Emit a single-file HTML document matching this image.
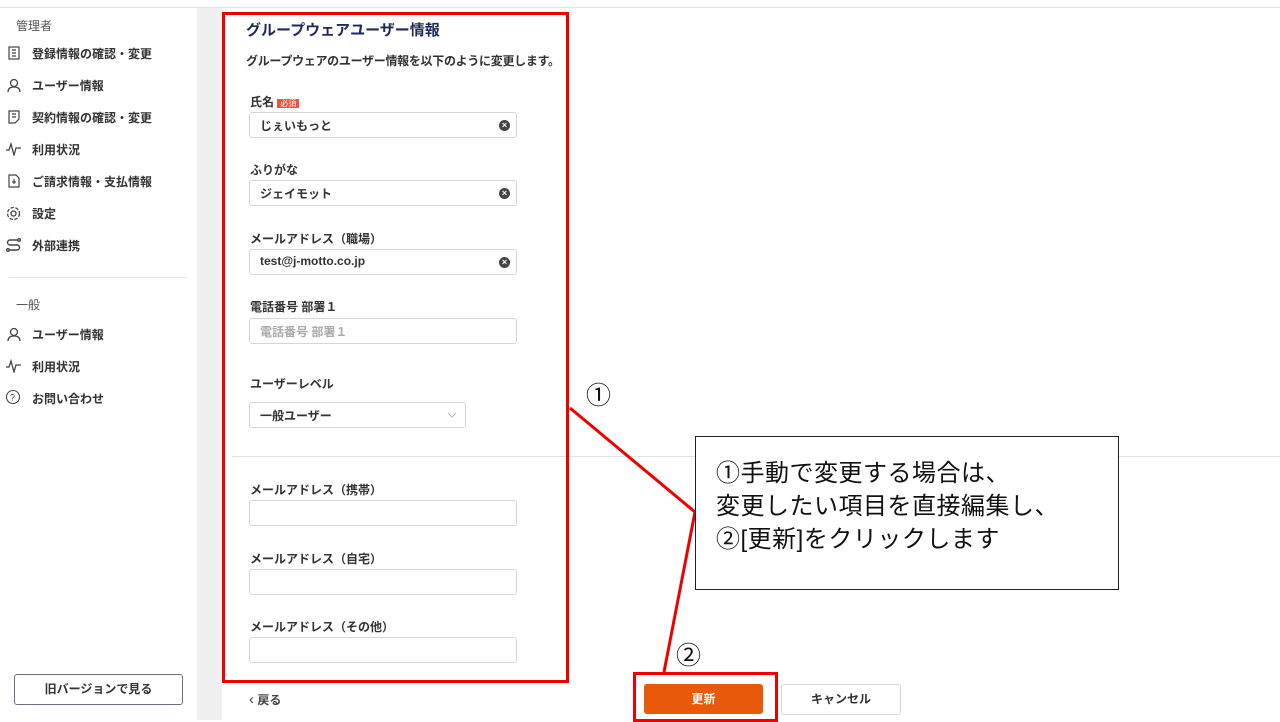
<!DOCTYPE html>
<html><head><meta charset="utf-8"><style>
*{margin:0;padding:0;box-sizing:border-box}
body{width:1280px;height:720px;position:relative;overflow:hidden;background:#fff;font-family:"Liberation Sans","Noto Sans CJK JP",sans-serif;color:#333}
.a{position:absolute}
.side{font-size:12px;font-weight:bold;color:#333}
.lbl{position:absolute;left:250px;font-size:12px;font-weight:bold;color:#333}
.inp{position:absolute;left:249px;width:268px;height:26px;border:1px solid #d6d6d6;border-radius:3px;font-size:12px;font-weight:bold;padding:4px 10px;color:#333}
.x{position:absolute;right:6px;top:7px;width:11px;height:11px;border-radius:50%;background:#444;color:#fff;font-size:9px;line-height:11px;text-align:center}
</style></head><body>
<div class="a" style="left:0;top:0;width:1280px;height:8px;border-bottom:1px solid #e4e4e4"></div>
<div class="a" style="left:197px;top:8px;width:25px;height:712px;background:#f0f0f0"></div>
<div class="a side" style="left:16px;top:17px;font-weight:normal;color:#555">管理者</div>
<svg class="a" style="left:7px;top:46px" width="14" height="14" viewBox="0 0 14 14" fill="none" stroke="#444" stroke-width="1.2"><rect x="2" y="1" width="10" height="12"/><path d="M5 4h4M5 7h4M5 10h4"/></svg>
<div class="a side" style="left:32px;top:45px">登録情報の確認・変更</div>
<svg class="a" style="left:7px;top:78px" width="14" height="14" viewBox="0 0 14 14" fill="none" stroke="#444" stroke-width="1.3"><circle cx="7" cy="5" r="3.5"/><path d="M1 14c0-4 3-5 6-5s6 1 6 5"/></svg>
<div class="a side" style="left:32px;top:77px">ユーザー情報</div>
<svg class="a" style="left:7px;top:110px" width="14" height="14" viewBox="0 0 14 14" fill="none" stroke="#444" stroke-width="1.2"><path d="M2 1h10v8l-4 4H2z M5 4h4M5 7h4"/></svg>
<div class="a side" style="left:32px;top:109px">契約情報の確認・変更</div>
<svg class="a" style="left:6px;top:142px" width="16" height="14" viewBox="0 0 16 14" fill="none" stroke="#444" stroke-width="1.3"><path d="M0 8h3l2-6 3 11 2-7h5"/></svg>
<div class="a side" style="left:32px;top:141px">利用状況</div>
<svg class="a" style="left:7px;top:174px" width="14" height="14" viewBox="0 0 14 14" fill="none" stroke="#444" stroke-width="1.2"><path d="M2 1h7l3 3v9H2z M7 5v5M5 8h4"/></svg>
<div class="a side" style="left:32px;top:173px">ご請求情報・支払情報</div>
<svg class="a" style="left:5px;top:205px" width="17" height="17" viewBox="0 0 17 17" fill="none" stroke="#444" stroke-width="1.3"><circle cx="8.5" cy="8.5" r="2.5"/><circle cx="8.5" cy="8.5" r="6" stroke-dasharray="3.5 1.5"/></svg>
<div class="a side" style="left:32px;top:205px">設定</div>
<svg class="a" style="left:6px;top:238px" width="15" height="14" viewBox="0 0 15 14" fill="none" stroke="#444" stroke-width="1.4"><path d="M12 2H4a2.5 2.5 0 000 5h7a2.5 2.5 0 010 5H3"/><circle cx="13" cy="2" r="1.3"/><circle cx="2" cy="12" r="1.3"/></svg>
<div class="a side" style="left:32px;top:237px">外部連携</div>
<div class="a" style="left:9px;top:277px;width:177px;height:1px;background:#e2e2e2"></div>
<div class="a side" style="left:16px;top:296px;font-weight:normal;color:#555">一般</div>
<svg class="a" style="left:7px;top:327px" width="14" height="14" viewBox="0 0 14 14" fill="none" stroke="#444" stroke-width="1.3"><circle cx="7" cy="5" r="3.5"/><path d="M1 14c0-4 3-5 6-5s6 1 6 5"/></svg>
<div class="a side" style="left:32px;top:326px">ユーザー情報</div>
<svg class="a" style="left:6px;top:359px" width="16" height="14" viewBox="0 0 16 14" fill="none" stroke="#444" stroke-width="1.3"><path d="M0 8h3l2-6 3 11 2-7h5"/></svg>
<div class="a side" style="left:32px;top:358px">利用状況</div>
<svg class="a" style="left:5px;top:389px" width="18" height="17" viewBox="0 0 18 17" fill="none" stroke="#444" stroke-width="1.1"><circle cx="8" cy="8" r="6.5"/><text x="5" y="11.5" font-size="9" fill="#444" stroke="none">?</text></svg>
<div class="a side" style="left:32px;top:390px">お問い合わせ</div>
<div class="a" style="left:14px;top:674px;width:169px;height:31px;border:1px solid #6b7080;border-radius:3px;font-size:12px;font-weight:bold;text-align:center;line-height:29px;color:#333">旧バージョンで見る</div>

<div class="a" style="left:246px;top:19px;font-size:15px;font-weight:bold;color:#1f2a5a">グループウェアユーザー情報</div>
<div class="a" style="left:246px;top:52px;font-size:12px;font-weight:bold;color:#333;letter-spacing:-0.3px">グループウェアのユーザー情報を以下のように変更します。</div>
<div class="lbl" style="top:93px">氏名 <span style="background:#e8553e;color:#fff;font-size:8px;padding:0 3px;font-weight:normal">必須</span></div>
<div class="inp" style="top:112px">じぇいもっと<div class="x">×</div></div>
<div class="lbl" style="top:161px">ふりがな</div>
<div class="inp" style="top:180px">ジェイモット<div class="x">×</div></div>
<div class="lbl" style="top:230px">メールアドレス（職場）</div>
<div class="inp" style="top:249px">test@j-motto.co.jp<div class="x">×</div></div>
<div class="lbl" style="top:298px">電話番号 部署１</div>
<div class="inp" style="top:318px;color:#aaa">電話番号 部署１</div>
<div class="lbl" style="top:375px">ユーザーレベル</div>
<div class="inp" style="top:402px;width:217px">一般ユーザー<svg class="a" style="right:8px;top:8px" width="10" height="8" viewBox="0 0 10 8" fill="none" stroke="#bbb"><path d="M1 2l4 4 4-4"/></svg></div>
<div class="a" style="left:232px;top:456px;width:1048px;height:1px;background:#e2e2e2"></div>
<div class="lbl" style="top:481px">メールアドレス（携帯）</div>
<div class="inp" style="top:500px"></div>
<div class="lbl" style="top:550px">メールアドレス（自宅）</div>
<div class="inp" style="top:569px"></div>
<div class="lbl" style="top:618px">メールアドレス（その他）</div>
<div class="inp" style="top:637px"></div>
<div class="a" style="left:222px;top:12px;width:347px;height:671px;border:3px solid #e00"></div>

<div class="a" style="left:249px;top:691px;font-size:12px;font-weight:bold;color:#444"><span style="font-size:15px;font-weight:normal">&lsaquo;</span> 戻る</div>
<div class="a" style="left:644px;top:684px;width:119px;height:30px;background:#e8590c;border-radius:3px;color:#fff;font-size:12px;font-weight:bold;text-align:center;line-height:30px">更新</div>
<div class="a" style="left:781px;top:684px;width:120px;height:31px;border:1px solid #d6d6d6;border-radius:3px;font-size:12px;font-weight:bold;text-align:center;line-height:29px">キャンセル</div>
<div class="a" style="left:633px;top:672px;width:145px;height:50px;border:3px solid #e00"></div>

<svg class="a" style="left:0;top:0" width="1280" height="720"><path d="M570 408L695 512L664 672" fill="none" stroke="#e00" stroke-width="3"/></svg>
<div class="a" style="left:586px;top:376px;font-size:25px;color:#111">①</div>
<div class="a" style="left:676px;top:636px;font-size:25px;color:#111">②</div>
<div class="a" style="left:695px;top:436px;width:424px;height:154px;border:1px solid #222;background:#fff;padding:20px 0 0 20px;font-size:24px;line-height:33px;color:#111;letter-spacing:0.5px;white-space:nowrap">①手動で変更する場合は、<br>変更したい項目を直接編集し、<br>②[更新]をクリックします</div>
</body></html>
